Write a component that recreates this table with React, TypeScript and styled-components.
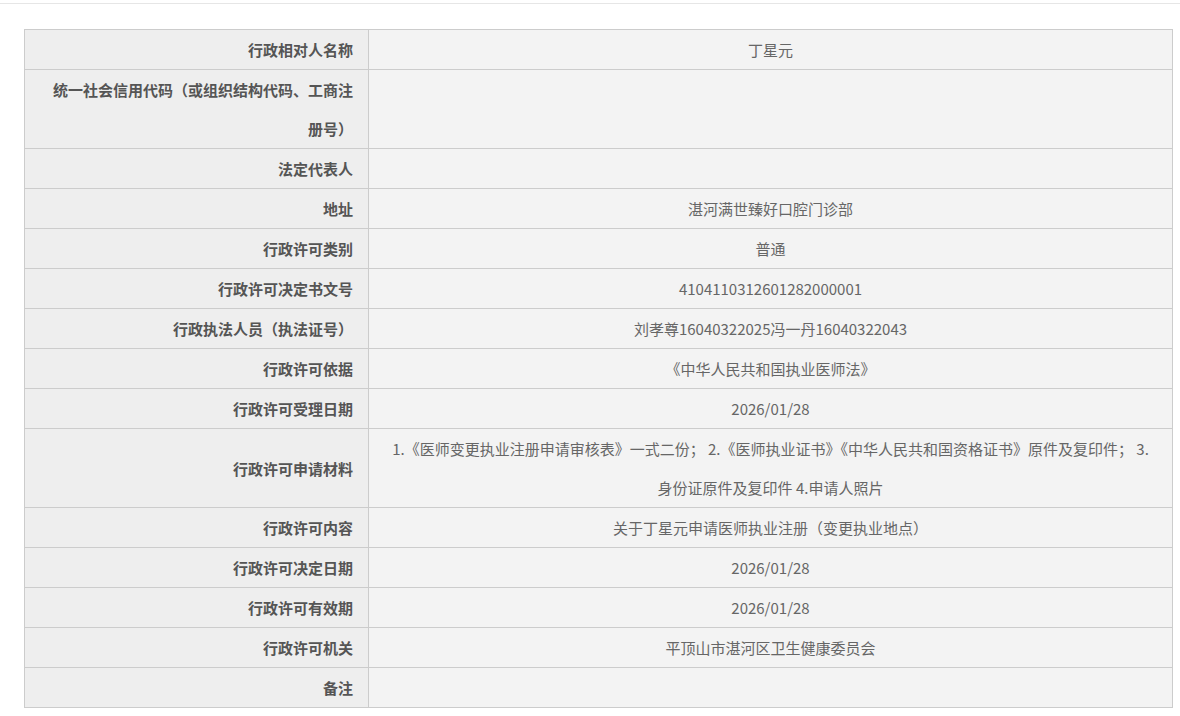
import React from "react";
import styled, { createGlobalStyle } from "styled-components";

const GlobalStyle = createGlobalStyle`
  html, body {
    margin: 0;
    padding: 0;
    background: #ffffff;
  }
  body {
    font-family: "Noto Sans CJK SC", "Microsoft YaHei", "Noto Sans", sans-serif;
    font-size: 15px;
    color: #666666;
  }
`;

const Page = styled.div`
  width: 1180px;
  padding-top: 3px;
`;

const TopRule = styled.div`
  height: 1px;
  background: #e6e6e6;
`;

const Table = styled.table`
  margin: 25px 0 0 24px;
  width: 1149px;
  border-collapse: collapse;
  table-layout: fixed;
  border: 1px solid #cccccc;
`;

const LabelCell = styled.th`
  width: 344px;
  box-sizing: border-box;
  padding: 0 15px 0 25px;
  background: #eeeeee;
  border: 1px solid #cccccc;
  text-align: right;
  font-weight: bold;
  color: #555555;
  font-size: 15px;
  line-height: 39px;
  vertical-align: middle;
`;

const ValueCell = styled.td`
  padding: 0 15px;
  background: #f3f3f3;
  border: 1px solid #cccccc;
  text-align: center;
  color: #666666;
  font-size: 15px;
  line-height: 39px;
  vertical-align: middle;
`;

const rows: [string, string][] = [
  ["行政相对人名称", "丁星元"],
  ["统一社会信用代码（或组织结构代码、工商注册号）", ""],
  ["法定代表人", ""],
  ["地址", "湛河满世臻好口腔门诊部"],
  ["行政许可类别", "普通"],
  ["行政许可决定书文号", "4104110312601282000001"],
  ["行政执法人员（执法证号）", "刘孝尊16040322025冯一丹16040322043"],
  ["行政许可依据", "《中华人民共和国执业医师法》"],
  ["行政许可受理日期", "2026/01/28"],
  [
    "行政许可申请材料",
    "1.《医师变更执业注册申请审核表》一式二份； 2.《医师执业证书》《中华人民共和国资格证书》原件及复印件； 3. 身份证原件及复印件 4.申请人照片",
  ],
  ["行政许可内容", "关于丁星元申请医师执业注册（变更执业地点）"],
  ["行政许可决定日期", "2026/01/28"],
  ["行政许可有效期", "2026/01/28"],
  ["行政许可机关", "平顶山市湛河区卫生健康委员会"],
  ["备注", ""],
];

export default function App() {
  return (
    <>
      <GlobalStyle />
      <Page>
        <TopRule />
        <Table>
          <tbody>
            {rows.map(([label, value]) => (
              <tr key={label}>
                <LabelCell>{label}</LabelCell>
                <ValueCell>{value}</ValueCell>
              </tr>
            ))}
          </tbody>
        </Table>
      </Page>
    </>
  );
}
